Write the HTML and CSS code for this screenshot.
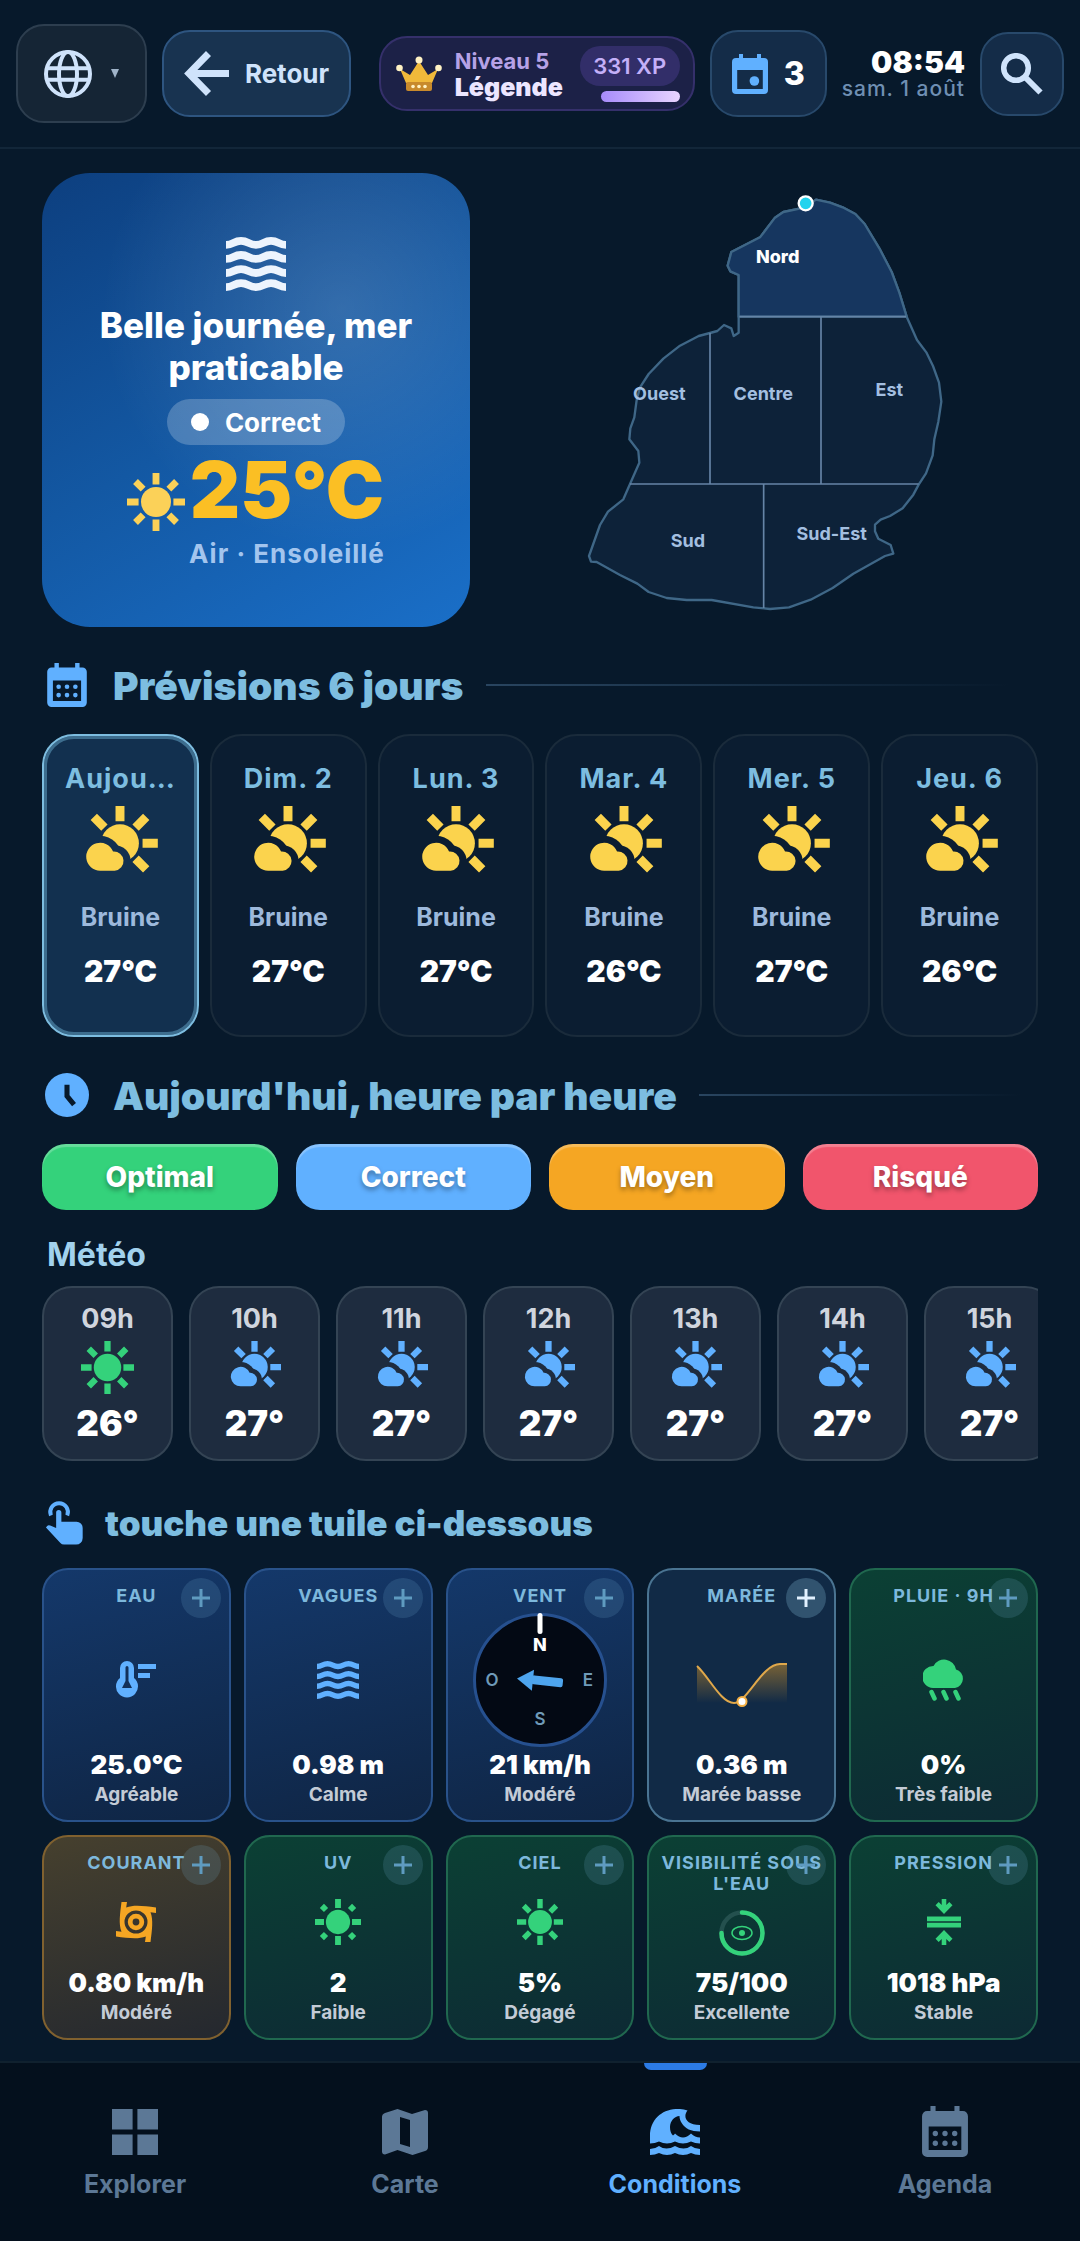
FILE: index.html
```html
<!DOCTYPE html>
<html lang="fr">
<head>
  <meta charset="UTF-8">
  <meta name="viewport" content="width=device-width, initial-scale=1">
  <title>Conditions</title>
  <link rel="stylesheet" href="styles.css">
</head>
<body>
  <!-- shared icons -->
  <svg class="sprite" aria-hidden="true">
    <symbol id="i-waves" viewBox="2 3 20 18">
      <g fill="none" stroke="currentColor" stroke-width="2.6">
        <path d="M2 5.6c2.5 0 2.5-1.3 5-1.3s2.5 1.3 5 1.3 2.5-1.3 5-1.3 2.5 1.3 5 1.3"/>
        <path d="M2 10.3c2.5 0 2.5-1.3 5-1.3s2.5 1.3 5 1.3 2.5-1.3 5-1.3 2.5 1.3 5 1.3"/>
        <path d="M2 15c2.5 0 2.5-1.3 5-1.3s2.5 1.3 5 1.3 2.5-1.3 5-1.3 2.5 1.3 5 1.3"/>
        <path d="M2 19.7c2.5 0 2.5-1.3 5-1.3s2.5 1.3 5 1.3 2.5-1.3 5-1.3 2.5 1.3 5 1.3"/>
      </g>
    </symbol>
    <symbol id="i-sun" viewBox="-11 -11 22 22">
      <circle r="5.7" fill="currentColor"/>
      <g stroke="currentColor" stroke-width="2.6">
        <path d="M0-11v4.4M0 11v-4.4M-11 0h4.4M11 0h-4.4"/>
        <path d="M0-11v4.1M0 11v-4.1M-11 0h4.1M11 0h-4.1" transform="rotate(45)"/>
      </g>
    </symbol>
    <symbol id="i-uv" viewBox="-11 -11 22 22">
      <circle r="5.8" fill="currentColor"/>
      <g stroke="currentColor" stroke-width="2.8">
        <path d="M0-11v4.3M0 11v-4.3M-11 0h4.3M11 0h-4.3"/>
        <path d="M0-10.9v2.8M0 10.9v-2.8M-10.9 0h2.8M10.9 0h-2.8" transform="rotate(45)"/>
      </g>
    </symbol>
    <symbol id="i-partly" viewBox="-114 -112 228 202">
      <mask id="cloud-cut" maskUnits="userSpaceOnUse" x="-114" y="-112" width="228" height="202">
        <rect x="-114" y="-112" width="228" height="202" fill="#fff"/>
        <circle cx="-59" cy="41" r="63" fill="#000"/>
        <circle cx="-16" cy="54" r="48" fill="#000"/>
      </mask>
      <circle r="57" fill="currentColor" mask="url(#cloud-cut)"/>
      <path d="M0-112v46M114 0h-46M-79-79l32 32M79-79l-32 32M79 79l-32-32" stroke="currentColor" stroke-width="27"/>
      <path d="M-60 83a42 42 0 1 1 39-58a29 29 0 1 1 5 58z" fill="currentColor"/>
    </symbol>
    <symbol id="i-calendar" viewBox="3 2 18 20">
      <path fill="currentColor" fill-rule="evenodd" d="M5 4h1.300V2h2v2h7.400V2h2v2H19a2 2 0 0 1 2 2v14a2 2 0 0 1-2 2H5a2 2 0 0 1-2-2V6a2 2 0 0 1 2-2zM5.600 10v9.300h12.800V10z"/>
      <g fill="currentColor">
        <circle cx="8.200" cy="12.800" r="1.050"/><circle cx="12" cy="12.800" r="1.050"/><circle cx="15.800" cy="12.800" r="1.050"/>
        <circle cx="8.200" cy="16.600" r="1.050"/><circle cx="12" cy="16.600" r="1.050"/><circle cx="15.800" cy="16.600" r="1.050"/>
      </g>
    </symbol>
    <symbol id="i-plus" viewBox="0 0 18 18">
      <path d="M9 0v18M0 9h18" stroke="currentColor" stroke-width="3"/>
    </symbol>
  </svg>

  <header class="topbar">
    <button class="btn btn-lang" aria-label="Langue">
      <svg class="globe" viewBox="0 0 48 48" fill="none" stroke="currentColor" stroke-width="4">
        <circle cx="24" cy="24" r="22"/>
        <ellipse cx="24" cy="24" rx="9" ry="22"/>
        <path d="M3 18.300h42M3 29.700h42"/>
      </svg>
      <svg class="caret" viewBox="0 0 8 9"><path d="M0 0h8L4 9z" fill="currentColor"/></svg>
    </button>
    <button class="btn btn-back">
      <svg class="back-icon" viewBox="0 0 45 45" fill="none" stroke="currentColor" stroke-width="7">
        <path d="M24.500 2.500L5 22.500l19.500 20M5 22.500h40"/>
      </svg>
      Retour
    </button>

    <div class="level">
      <svg class="crown" viewBox="0 0 46 36">
        <path d="M10 27L4 13l10 6 9-14 9 14 10-6-6 14z" fill="#f0b93a"/>
        <rect x="10" y="26" width="26" height="9" rx="2" fill="#c88a2c"/>
        <g fill="#fff2c4">
          <circle cx="3.500" cy="12" r="3.300"/><circle cx="23" cy="4" r="3.500"/><circle cx="42.500" cy="12" r="3.300"/>
          <circle cx="17" cy="30.500" r="1.800"/><circle cx="23" cy="30.500" r="1.800"/><circle cx="29" cy="30.500" r="1.800"/>
        </g>
      </svg>
      <div class="level-names">
        <span class="level-num">Niveau 5</span>
        <span class="level-title">Légende</span>
      </div>
      <div class="level-xp">
        <span class="xp">331 XP</span>
        <span class="xp-bar"></span>
      </div>
    </div>

    <button class="btn btn-events">
      <svg class="event-icon" viewBox="3 2 18 20">
        <path fill="currentColor" fill-rule="evenodd" d="M5 4h1.500V2h2v2h7V2h2v2H19a2 2 0 0 1 2 2v14a2 2 0 0 1-2 2H5a2 2 0 0 1-2-2V6a2 2 0 0 1 2-2zM5.600 10v9.500h12.800V10z"/>
        <circle cx="14.200" cy="15.500" r="2.400" fill="currentColor"/>
      </svg>
      3
    </button>
    <div class="clock">
      <time class="clock-time">08:54</time>
      <span class="clock-date">sam. 1 août</span>
    </div>
    <button class="btn btn-search" aria-label="Rechercher">
      <svg class="search-icon" viewBox="0 0 42 42" fill="none" stroke="currentColor">
        <circle cx="15" cy="15" r="12.300" stroke-width="5.500"/>
        <path d="M24 24l15.500 15.500" stroke-width="6"/>
      </svg>
    </button>
  </header>

  <main class="content">
    <section class="hero">
      <div class="hero-card">
        <svg class="hero-waves"><use href="#i-waves"/></svg>
        <h1 class="hero-title">Belle journée, mer praticable</h1>
        <span class="hero-pill"><i class="dot"></i>Correct</span>
        <div class="hero-temp">
          <svg class="hero-sun"><use href="#i-sun"/></svg>
          <div class="hero-air">
            <strong class="hero-deg">25°C</strong>
            <span class="hero-label">Air · Ensoleillé</span>
          </div>
        </div>
      </div>

      <svg class="map" viewBox="0 9 1260 1362">
        <path class="map-land" d="M736 112L768 89 810 98 848 112 886 132 914 162 958 235 995 306 1018 368 1040 440 1071 510 1099 547 1119 588 1137 638 1144 695 1135 755 1123 808 1118 856 1098 910 1076 944 1060 974 1028 1015 990 1038 962 1049 945 1064 945 1084 955 1106 992 1125 1000 1151 975 1158 880 1211 818 1254 752 1289 687 1312 630 1317 580 1312 455 1290 380 1290 320 1284 266 1266 232 1241 180 1215 110 1176 93 1175 87 1158 120 1065 144 1025 190 988 210 942 238 878 235 843 208 808 211 775 223 742 230 690 240 652 266 612 310 566 360 527 416 498 450 489 472 483 492 465 514 475 521 498 536 488 536 440 536 315 511 304 503 287 514 246 600 202 645 143 670 126z"/>
        <path class="map-active" d="M536 440V315L511 304 503 287 514 246 600 202 645 143 670 126 736 112 768 89 810 98 848 112 886 132 914 162 958 235 995 306 1018 368 1040 440z"/>
        <path class="map-line" d="M538 440H1038M450 489V942M783 440V942M210 942H1076M611 942V1314"/>
        <circle cx="737" cy="100" r="21" fill="#22d3ee" stroke="#fff" stroke-width="7"/>
        <g class="map-names">
          <text class="on" x="653" y="278">Nord</text>
          <text x="298" y="689">Ouest</text>
          <text x="610" y="689">Centre</text>
          <text x="988" y="678">Est</text>
          <text x="384" y="1130">Sud</text>
          <text x="815" y="1109">Sud-Est</text>
        </g>
      </svg>
    </section>

    <div class="section-title">
      <svg class="title-icon cal"><use href="#i-calendar"/></svg>
      <h2>Prévisions 6 jours</h2>
      <span class="rule"></span>
    </div>
    <section class="days">
      <button class="day selected">
        <span class="day-name">Aujou…</span>
        <svg class="day-icon"><use href="#i-partly"/></svg>
        <span class="day-text">Bruine</span>
        <span class="day-temp">27°C</span>
      </button>
      <button class="day">
        <span class="day-name">Dim. 2</span>
        <svg class="day-icon"><use href="#i-partly"/></svg>
        <span class="day-text">Bruine</span>
        <span class="day-temp">27°C</span>
      </button>
      <button class="day">
        <span class="day-name">Lun. 3</span>
        <svg class="day-icon"><use href="#i-partly"/></svg>
        <span class="day-text">Bruine</span>
        <span class="day-temp">27°C</span>
      </button>
      <button class="day">
        <span class="day-name">Mar. 4</span>
        <svg class="day-icon"><use href="#i-partly"/></svg>
        <span class="day-text">Bruine</span>
        <span class="day-temp">26°C</span>
      </button>
      <button class="day">
        <span class="day-name">Mer. 5</span>
        <svg class="day-icon"><use href="#i-partly"/></svg>
        <span class="day-text">Bruine</span>
        <span class="day-temp">27°C</span>
      </button>
      <button class="day">
        <span class="day-name">Jeu. 6</span>
        <svg class="day-icon"><use href="#i-partly"/></svg>
        <span class="day-text">Bruine</span>
        <span class="day-temp">26°C</span>
      </button>
    </section>

    <div class="section-title">
      <svg class="title-icon" viewBox="2 2 20 20">
        <circle cx="12" cy="12" r="10" fill="currentColor"/>
        <path d="M12 7.300v5.200l3.200 3.900" fill="none" stroke="#07192b" stroke-width="2.300"/>
      </svg>
      <h2>Aujourd'hui, heure par heure</h2>
      <span class="rule"></span>
    </div>
    <section class="legend">
      <button class="chip green">Optimal</button>
      <button class="chip blue">Correct</button>
      <button class="chip orange">Moyen</button>
      <button class="chip red">Risqué</button>
    </section>

    <h3 class="subtitle">Météo</h3>
    <section class="hours">
      <div class="hour">
        <span class="hour-name">09h</span>
        <svg class="hour-icon sunny"><use href="#i-sun"/></svg>
        <span class="hour-temp">26°</span>
      </div>
      <div class="hour">
        <span class="hour-name">10h</span>
        <svg class="hour-icon"><use href="#i-partly"/></svg>
        <span class="hour-temp">27°</span>
      </div>
      <div class="hour">
        <span class="hour-name">11h</span>
        <svg class="hour-icon"><use href="#i-partly"/></svg>
        <span class="hour-temp">27°</span>
      </div>
      <div class="hour">
        <span class="hour-name">12h</span>
        <svg class="hour-icon"><use href="#i-partly"/></svg>
        <span class="hour-temp">27°</span>
      </div>
      <div class="hour">
        <span class="hour-name">13h</span>
        <svg class="hour-icon"><use href="#i-partly"/></svg>
        <span class="hour-temp">27°</span>
      </div>
      <div class="hour">
        <span class="hour-name">14h</span>
        <svg class="hour-icon"><use href="#i-partly"/></svg>
        <span class="hour-temp">27°</span>
      </div>
      <div class="hour">
        <span class="hour-name">15h</span>
        <svg class="hour-icon"><use href="#i-partly"/></svg>
        <span class="hour-temp">27°</span>
      </div>
    </section>

    <div class="section-title hint">
      <svg class="title-icon touch" viewBox="0 0 116 132">
        <path d="M18 47A27 27 0 1 1 68 47" transform="translate(0 -4)" fill="none" stroke="currentColor" stroke-width="12"/>
        <path fill="currentColor" d="M34 34a8 8 0 0 1 16 0V62H96a19 19 0 0 1 19 19V112a20 20 0 0 1-20 20H58q-7 0-11-5L3 80l3-4q4-5 10-2L34 81z"/>
      </svg>
      <h2>touche une tuile ci-dessous</h2>
    </div>
    <section class="tiles">
      <article class="tile blue-tile">
        <h4 class="tile-name">Eau</h4>
        <button class="plus" aria-label="Détails eau"><svg><use href="#i-plus"/></svg></button>
        <div class="figure">
          <svg width="40" height="38" viewBox="0 0 40 38">
            <path fill="currentColor" fill-rule="evenodd" d="M4 17V7a7 7 0 0 1 14 0v10a11 11 0 1 1-14 0zM9.500 6.500V20L6 27h10l-3.500-7V6.500a1.500 1.500 0 0 0-3 0z"/>
            <path fill="currentColor" d="M22 3h18v5H22zM22 12h12v5H22z"/>
          </svg>
        </div>
        <strong class="tile-value">25.0°C</strong>
        <span class="tile-note">Agréable</span>
      </article>
      <article class="tile blue-tile">
        <h4 class="tile-name">Vagues</h4>
        <button class="plus" aria-label="Détails vagues"><svg><use href="#i-plus"/></svg></button>
        <div class="figure"><svg width="42" height="38"><use href="#i-waves"/></svg></div>
        <strong class="tile-value">0.98 m</strong>
        <span class="tile-note">Calme</span>
      </article>
      <article class="tile blue-tile">
        <h4 class="tile-name">Vent</h4>
        <button class="plus" aria-label="Détails vent"><svg><use href="#i-plus"/></svg></button>
        <div class="figure">
          <svg class="compass" width="134" height="134" viewBox="-67 -67 134 134">
            <circle r="65.500" fill="#030914" stroke="#26508f" stroke-width="3"/>
            <rect x="-2.500" y="-67" width="5" height="21" rx="2.500" fill="#fff"/>
            <text class="north" y="-29">N</text>
            <text x="-48" y="6">O</text>
            <text x="48" y="6">E</text>
            <text y="45">S</text>
            <g transform="rotate(6)" fill="#4ea5ee">
              <path d="M-23 1L-7-9.500v21z"/>
              <rect x="-8" y="-4" width="31" height="9" rx="2"/>
            </g>
          </svg>
        </div>
        <strong class="tile-value">21 km/h</strong>
        <span class="tile-note">Modéré</span>
      </article>
      <article class="tile open-tile">
        <h4 class="tile-name">Marée</h4>
        <button class="plus" aria-label="Détails marée"><svg><use href="#i-plus"/></svg></button>
        <div class="figure">
          <svg width="92" height="56" viewBox="0 -11 92 56">
            <linearGradient id="tide" x1="0" y1="0" x2="0" y2="1">
              <stop offset="0" stop-color="#f5a623" stop-opacity=".45"/>
              <stop offset="1" stop-color="#f5a623" stop-opacity="0"/>
            </linearGradient>
            <path d="M1 3C13 14 25 40 38 40S66 1 84 1h7V40H1z" fill="url(#tide)"/>
            <path d="M1 3C13 14 25 40 38 40S66 1 84 1h7" fill="none" stroke="#e0a84b" stroke-width="2"/>
            <circle cx="46" cy="38.500" r="4.500" fill="#fff" stroke="#f5b044" stroke-width="2"/>
          </svg>
        </div>
        <strong class="tile-value">0.36 m</strong>
        <span class="tile-note">Marée basse</span>
      </article>
      <article class="tile green-tile">
        <h4 class="tile-name">Pluie · 9h</h4>
        <button class="plus" aria-label="Détails pluie"><svg><use href="#i-plus"/></svg></button>
        <div class="figure">
          <svg width="42" height="42" viewBox="0 0 42 42">
            <path fill="currentColor" d="M10 29A11 11 0 0 1 10.500 7 12 12 0 0 1 33 10.500 9.500 9.500 0 0 1 32 29z"/>
            <path d="M8.500 33l3 6.500M20.500 33l3 6.500M32.500 33l3 6.500" stroke="currentColor" stroke-width="4.500" stroke-linecap="round"/>
          </svg>
        </div>
        <strong class="tile-value">0%</strong>
        <span class="tile-note">Très faible</span>
      </article>
      <article class="tile amber-tile">
        <h4 class="tile-name">Courant</h4>
        <button class="plus" aria-label="Détails courant"><svg><use href="#i-plus"/></svg></button>
        <div class="figure">
          <svg width="40" height="40" viewBox="0 0 40 40">
            <path fill="currentColor" fill-rule="evenodd" d="M5.500 0h5.500l-.8 5.500C18 2.500 28 4 40 5.500V11l-5.500-.8C37.500 18 36 28 34.500 40H29l.8-5.500C22 37.500 12 36 0 34.500V29l5.500.8C2.500 22 4 12 5.500 0zM20 8.500a11.500 11.500 0 1 0 0 23 11.500 11.500 0 1 0 0-23z"/>
            <circle cx="20" cy="20" r="5.800" fill="none" stroke="currentColor" stroke-width="4.800"/>
          </svg>
        </div>
        <strong class="tile-value">0.80 km/h</strong>
        <span class="tile-note">Modéré</span>
      </article>
      <article class="tile green-tile">
        <h4 class="tile-name">UV</h4>
        <button class="plus" aria-label="Détails UV"><svg><use href="#i-plus"/></svg></button>
        <div class="figure"><svg width="46" height="46"><use href="#i-uv"/></svg></div>
        <strong class="tile-value">2</strong>
        <span class="tile-note">Faible</span>
      </article>
      <article class="tile green-tile">
        <h4 class="tile-name">Ciel</h4>
        <button class="plus" aria-label="Détails ciel"><svg><use href="#i-plus"/></svg></button>
        <div class="figure"><svg width="46" height="46"><use href="#i-sun"/></svg></div>
        <strong class="tile-value">5%</strong>
        <span class="tile-note">Dégagé</span>
      </article>
      <article class="tile green-tile">
        <h4 class="tile-name">Visibilité sous l'eau</h4>
        <button class="plus" aria-label="Détails visibilité"><svg><use href="#i-plus"/></svg></button>
        <div class="figure">
          <svg width="46" height="46" viewBox="-23 -23 46 46" fill="none" stroke="currentColor">
            <circle r="20.500" stroke="#24504e" stroke-width="4.500"/>
            <path d="M0-20.500A20.500 20.500 0 1 1-20.500 0" stroke-width="4.500" stroke-linecap="round"/>
            <ellipse rx="10" ry="6.500" stroke-width="1.500"/>
            <circle r="3" fill="currentColor" stroke="none"/>
          </svg>
        </div>
        <strong class="tile-value">75/100</strong>
        <span class="tile-note">Excellente</span>
      </article>
      <article class="tile green-tile">
        <h4 class="tile-name">Pression</h4>
        <button class="plus" aria-label="Détails pression"><svg><use href="#i-plus"/></svg></button>
        <div class="figure">
          <svg width="34" height="46" viewBox="0 0 34 46" fill="currentColor">
            <path d="M0 17.500h34v4.800H0zM0 23.700h34v4.800H0z"/>
            <path d="M14.700 0h4.600v6l3-3 3.200 3.200L17 15 8.500 6.200 11.700 3l3 3zM14.700 46h4.600v-6l3 3 3.200-3.200L17 31l-8.500 8.800 3.200 3.200 3-3z"/>
          </svg>
        </div>
        <strong class="tile-value">1018 hPa</strong>
        <span class="tile-note">Stable</span>
      </article>
    </section>
  </main>

  <nav class="tabs">
    <a class="tab" href="#explorer">
      <svg viewBox="0 0 46 46"><path fill="currentColor" d="M0 0h20.600v20.600H0zM25.400 0H46v20.600H25.400zM0 25.400h20.600V46H0zM25.400 25.400H46V46H25.400z"/></svg>
      Explorer
    </a>
    <a class="tab" href="#carte">
      <svg viewBox="0 0 46 46"><path fill="currentColor" fill-rule="evenodd" d="M0 8q0-3 3-4L15.500 0 30 5 43 1q3 0 3 3v34q0 3-3 4L30.500 46 15.500 41 3 45.500Q0 45.500 0 42.500zM18 8v27l10 3V11z"/></svg>
      Carte
    </a>
    <a class="tab active" href="#conditions">
      <svg viewBox="0 0 50 46">
        <path fill="currentColor" d="M0 33V27C0 9 14-1 30 0q4 0 7.500 1.500C33 7 35 16 50 16v6.500c-9 0-15-3-18-8-2-3-2.500-5-2.500-7.500-5 0-9.500 5-9.500 11 0 4 1 6.500 3 8.500q2-1.500 2-2 4 4 8 4t8-4q4 4 9 4v6q-5 0-9-2-8 4-16 0-8 4-16 0-4 2-9 2z"/>
        <path fill="currentColor" d="M0 40q5 0 9-3 7 5 16 0 9 5 16 0 4 3 9 3v6q-5 0-9-2-8 4-16 0-8 4-16 0-4 2-9 2z"/>
      </svg>
      Conditions
    </a>
    <a class="tab" href="#agenda">
      <svg class="tall"><use href="#i-calendar"/></svg>
      Agenda
    </a>
  </nav>
</body>
</html>
```
FILE: styles.css
```css
* {
  box-sizing: border-box;
}
body {
  margin: 0;
  min-height: 100vh;
  display: flex;
  flex-direction: column;
  background: #07192b;
  color: #fff;
  font-family: Inter, "Liberation Sans", sans-serif;
}
button {
  font: inherit;
  color: inherit;
  margin: 0;
  padding: 0;
  border: 0;
  background: none;
}
h1, h2, h3, h4 {
  margin: 0;
}
svg {
  display: block;
  flex: none;
}
.sprite {
  position: absolute;
  width: 0;
  height: 0;
}

/* top bar */
.topbar {
  display: flex;
  align-items: center;
  gap: 15px;
  height: 149px;
  padding: 0 16px;
  border-bottom: 2px solid #122639;
}
.btn {
  display: flex;
  align-items: center;
  justify-content: center;
  border: 2px solid #28496b;
  border-radius: 28px;
  background: #142c48;
  color: #cfe3fb;
}
.btn-lang {
  width: 131px;
  height: 99px;
  gap: 19px;
  border-color: #2d3e4f;
  background: #152535;
}
.globe {
  width: 48px;
  height: 48px;
}
.caret {
  width: 8px;
  height: 9px;
  color: #9fb3c8;
}
.btn-back {
  width: 189px;
  height: 87px;
  gap: 16px;
  border-color: #2e5580;
  background: #183350;
  font-size: 26px;
  font-weight: 700;
}
.back-icon {
  width: 45px;
  height: 45px;
}
.level {
  display: flex;
  align-items: center;
  gap: 13px;
  width: 316px;
  height: 75px;
  margin-left: auto;
  padding: 0 13px 0 15px;
  border: 2px solid #35306b;
  border-radius: 28px;
  background: #1c2147;
}
.crown {
  width: 46px;
  height: 36px;
}
.level-names {
  display: flex;
  flex-direction: column;
  flex: 1;
}
.level-num {
  font-size: 22px;
  line-height: 26px;
  font-weight: 700;
  color: #b6a2e6;
}
.level-title {
  font-size: 25px;
  line-height: 26px;
  font-weight: 900;
  color: #ece6ff;
}
.level-xp {
  display: flex;
  flex-direction: column;
  align-items: flex-end;
  gap: 5px;
}
.xp {
  width: 100px;
  border-radius: 20px;
  background: #322e69;
  color: #c4b0f8;
  font-size: 22px;
  line-height: 40px;
  font-weight: 600;
  text-align: center;
}
.xp-bar {
  width: 79px;
  height: 11px;
  border-radius: 6px;
  background: linear-gradient(90deg, #a78bfa, #e9d5ff);
}
.btn-events {
  width: 117px;
  height: 87px;
  gap: 16px;
  color: #fff;
  font-size: 32px;
  font-weight: 800;
}
.event-icon {
  width: 36px;
  height: 40px;
  color: #60b0ff;
}
.clock {
  display: flex;
  flex-direction: column;
  align-items: flex-end;
}
.clock-time {
  font-size: 30px;
  line-height: 30px;
  font-weight: 900;
}
.clock-date {
  font-size: 21px;
  line-height: 24px;
  font-weight: 500;
  letter-spacing: 1px;
  color: #6f8fb3;
}
.btn-search {
  width: 84px;
  height: 84px;
}
.search-icon {
  width: 42px;
  height: 42px;
}

.content {
  flex: 1;
  padding: 24px 42px 18px;
}

/* today */
.hero {
  display: grid;
  grid-template-columns: 428px 1fr;
  gap: 32px;
}
.hero-card {
  display: flex;
  flex-direction: column;
  align-items: center;
  padding: 64px 40px 57px;
  border-radius: 48px;
  text-align: center;
  background:
    radial-gradient(circle at 70% 30%, rgba(255, 255, 255, .14), transparent 55%),
    linear-gradient(150deg, #0d3f7f, #1358a3 50%, #1a6fc8);
}
.hero-waves {
  width: 60px;
  height: 54px;
  color: #edf4fd;
}
.hero-title {
  margin-top: 13px;
  font-size: 35px;
  line-height: 42px;
  font-weight: 800;
}
.hero-pill {
  display: flex;
  align-items: center;
  gap: 16px;
  height: 46px;
  margin-top: 11px;
  padding: 0 24px;
  border-radius: 23px;
  background: rgba(255, 255, 255, .22);
  font-size: 26px;
  font-weight: 700;
}
.dot {
  width: 18px;
  height: 18px;
  border-radius: 50%;
  background: #fff;
}
.hero-temp {
  display: flex;
  align-items: center;
  gap: 4px;
  margin-top: 5px;
}
.hero-sun {
  width: 58px;
  height: 58px;
  margin-bottom: 16px;
  color: #fbd158;
}
.hero-air {
  display: flex;
  flex-direction: column;
  align-items: center;
  gap: 8px;
}
.hero-deg {
  font-size: 78px;
  line-height: 80px;
  font-weight: 900;
  color: #fbbf24;
}
.hero-label {
  font-size: 26px;
  line-height: 32px;
  font-weight: 700;
  letter-spacing: 1px;
  color: #a3c5ee;
}
.map {
  width: 420px;
  height: 454px;
  justify-self: center;
}
.map-land {
  fill: #0d2239;
  stroke: #3f6787;
  stroke-width: 7;
  stroke-linejoin: round;
}
.map-active {
  fill: #16365f;
  stroke: #3f6787;
  stroke-width: 7;
  stroke-linejoin: round;
}
.map-line {
  stroke: #6584a6;
  stroke-width: 5;
}
.map-names {
  fill: #a3bfe0;
  font-size: 54px;
  font-weight: 700;
  text-anchor: middle;
}
.map-names .on {
  fill: #fff;
  font-weight: 800;
}

/* section headings */
.section-title {
  display: flex;
  align-items: center;
  height: 56px;
  margin: 30px 0 21px;
  padding-left: 3px;
  color: #7dbde0;
}
.section-title h2 {
  margin-left: 24px;
  font-size: 39px;
  font-weight: 900;
  white-space: nowrap;
}
.title-icon {
  width: 44px;
  height: 44px;
  color: #60b0ff;
}
.title-icon.cal {
  padding: 0 2px;
}
.title-icon.touch {
  width: 38px;
}
.section-title.hint {
  margin: 34px 0 17px;
}
.section-title.hint h2 {
  margin-left: 22px;
  font-size: 35px;
}
.rule {
  flex: 1;
  height: 2px;
  margin-left: 22px;
  background: linear-gradient(90deg, #294560, transparent 95%);
}

/* 6 days */
.days {
  display: grid;
  grid-template-columns: repeat(6, 1fr);
  gap: 11px;
}
.day {
  display: flex;
  flex-direction: column;
  align-items: center;
  padding: 26px 4px 46px;
  border: 2px solid #1a2b3b;
  border-radius: 32px;
  background: #0b1d31;
}
.day.selected {
  border-color: #7dbde0;
  background: #12304f;
  box-shadow: inset 0 0 0 3px #3d6d8e;
}
.day-name {
  font-size: 27px;
  line-height: 34px;
  font-weight: 700;
  letter-spacing: 1px;
  color: #7dbde0;
}
.day-icon {
  width: 76px;
  height: 67px;
  margin-top: 10px;
  color: #fbd34d;
}
.day-text {
  margin-top: 29px;
  font-size: 25px;
  line-height: 30px;
  font-weight: 700;
  color: #9db9dc;
}
.day-temp {
  margin-top: 21px;
  font-size: 30px;
  line-height: 36px;
  font-weight: 900;
}

/* hour by hour */
.legend {
  display: grid;
  grid-template-columns: repeat(4, 1fr);
  gap: 18px;
}
.chip {
  height: 66px;
  border-radius: 24px;
  font-size: 28px;
  font-weight: 800;
  text-shadow: 0 3px 5px rgba(0, 0, 0, .35);
  box-shadow: inset 0 3px 1px rgba(255, 255, 255, .25);
}
.green {
  background: #34d27b;
}
.blue {
  background: #60b0ff;
}
.orange {
  background: #f5a623;
}
.red {
  background: #f1556c;
}
.subtitle {
  margin: 25px 5px 11px;
  font-size: 32px;
  line-height: 40px;
  font-weight: 700;
  color: #a2d2ee;
}
.hours {
  display: flex;
  gap: 16px;
  overflow: hidden;
}
.hour {
  display: flex;
  flex: none;
  flex-direction: column;
  align-items: center;
  width: 131px;
  padding: 15px 0 16px;
  border: 2px solid #344454;
  border-radius: 30px;
  background: #1e2c3f;
}
.hour-name {
  font-size: 27px;
  line-height: 32px;
  font-weight: 700;
  color: #d0d5de;
}
.hour-icon {
  width: 53px;
  height: 47px;
  margin: 6px 0 15px;
  color: #60b0ff;
}
.hour-icon.sunny {
  height: 53px;
  margin-bottom: 9px;
  color: #34d27b;
}
.hour-temp {
  font-size: 35px;
  line-height: 40px;
  font-weight: 900;
}

/* tiles */
.tiles {
  display: grid;
  grid-template-columns: repeat(5, 1fr);
  grid-template-rows: minmax(254px, auto) minmax(205px, auto);
  gap: 13px;
}
.tile {
  position: relative;
  display: flex;
  flex-direction: column;
  align-items: center;
  padding: 15px 10px 13px;
  border: 2px solid;
  border-radius: 26px;
  text-align: center;
}
.blue-tile {
  border-color: #29528a;
  background: linear-gradient(165deg, #14386a, #0f2544);
  color: #60b0ff;
}
.open-tile {
  border-color: #4a7492;
  background: #112a46;
}
.green-tile {
  border-color: #20684f;
  background: linear-gradient(165deg, #0b4034, #0d2a34);
  color: #34d27b;
}
.amber-tile {
  border-color: #80612f;
  background: linear-gradient(165deg, #46402e, #24282f);
  color: #f5a623;
}
.tile-name {
  font-size: 18px;
  line-height: 21px;
  font-weight: 700;
  letter-spacing: 1px;
  text-transform: uppercase;
  color: #7db8dc;
}
.plus {
  position: absolute;
  top: 8px;
  right: 8px;
  display: grid;
  place-items: center;
  width: 40px;
  height: 40px;
  border-radius: 50%;
  background: rgba(125, 189, 224, .16);
  color: #5f9bc0;
}
.plus svg {
  width: 18px;
  height: 18px;
}
.open-tile .plus {
  background: #31536f;
  color: #e2f1ff;
}
.figure {
  flex: 1;
  display: flex;
  align-items: center;
  padding-top: 4px;
}
.compass text {
  fill: #6f9ab8;
  font-size: 17px;
  font-weight: 600;
  text-anchor: middle;
}
.compass .north {
  fill: #fff;
  font-size: 18px;
  font-weight: 800;
}
.tile-value {
  font-size: 26px;
  line-height: 32px;
  font-weight: 900;
  color: #fff;
}
.tile-note {
  margin-top: 2px;
  font-size: 19px;
  line-height: 24px;
  font-weight: 700;
  color: #c3cbd6;
}

/* bottom tabs */
.tabs {
  display: grid;
  grid-template-columns: repeat(4, 1fr);
  height: 180px;
  border-top: 2px solid #10212f;
  background: #04101d;
}
.tab {
  position: relative;
  display: flex;
  flex-direction: column;
  align-items: center;
  padding-top: 46px;
  color: #5c7896;
  font-size: 25px;
  line-height: 30px;
  font-weight: 700;
  text-decoration: none;
}
.tab svg {
  width: 50px;
  height: 46px;
  margin-bottom: 14px;
}
.tab svg.tall {
  height: 51px;
  margin: -3px 0 12px;
}
.tab.active {
  color: #60b0ff;
}
.tab.active::before {
  content: "";
  position: absolute;
  top: 0;
  width: 63px;
  height: 7px;
  border-radius: 0 0 7px 7px;
  background: #2c7be5;
}
```
